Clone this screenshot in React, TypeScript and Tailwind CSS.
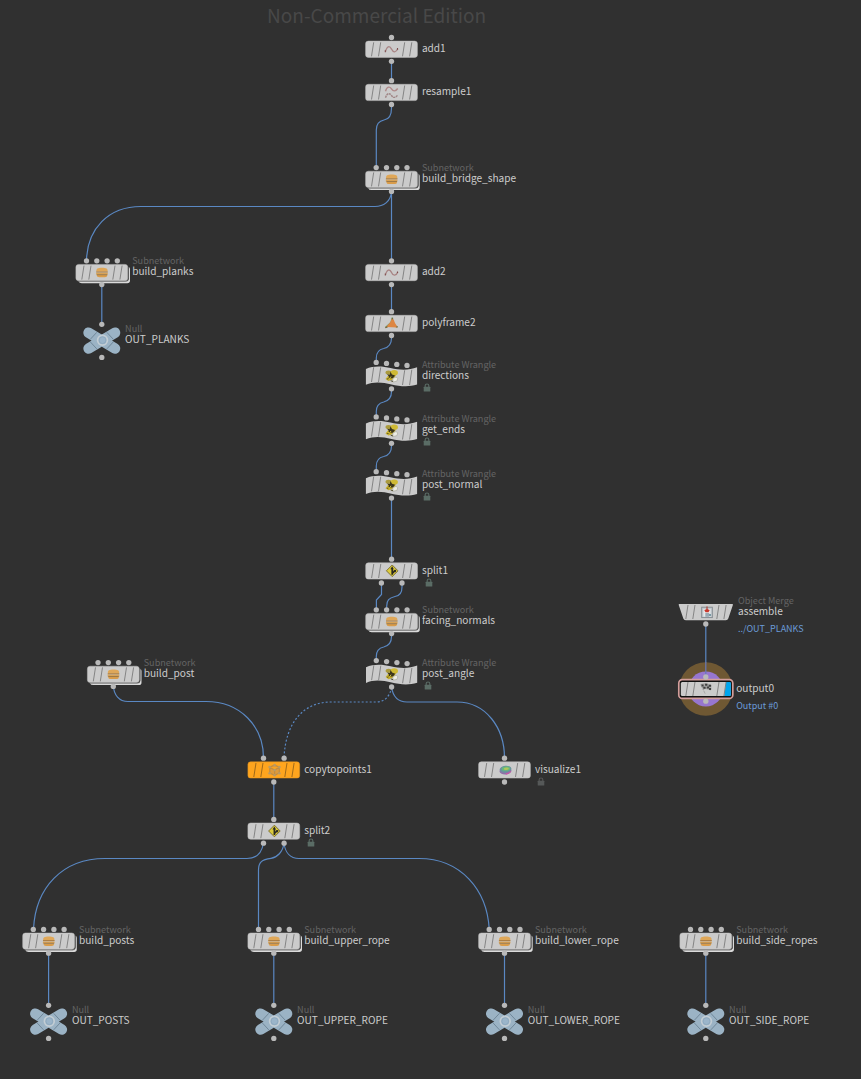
import React from "react";

type Kind = "box" | "subnet" | "wrangle" | "null" | "merge" | "output";
type Glyph = "curve" | "curves" | "burger" | "frame" | "bee" | "split" | "copy" | "viz" | "merge" | "flag" | "none";

interface NodeSpec {
  x: number;
  y: number;
  name: string;
  kind: Kind;
  glyph: Glyph;
  type?: string;
  info?: string;
  lock?: boolean;
  ins?: number[];
  outs?: number[];
  orange?: boolean;
}

const four = [-15.3, -5, 5.3, 15.5];

const nodes: NodeSpec[] = [
  { x: 391.5, y: 49.3, name: "add1", kind: "box", glyph: "curve", ins: [0], outs: [0] },
  { x: 391.5, y: 92.5, name: "resample1", kind: "box", glyph: "curves", ins: [0], outs: [0] },
  { x: 391.5, y: 179.4, name: "build_bridge_shape", kind: "subnet", glyph: "burger", type: "Subnetwork", ins: four, outs: [0] },
  { x: 101.8, y: 272.6, name: "build_planks", kind: "subnet", glyph: "burger", type: "Subnetwork", ins: four, outs: [0] },
  { x: 101.8, y: 340.6, name: "OUT_PLANKS", kind: "null", glyph: "none", type: "Null" },
  { x: 391.5, y: 272.6, name: "add2", kind: "box", glyph: "curve", ins: [0], outs: [0] },
  { x: 391.5, y: 323.5, name: "polyframe2", kind: "box", glyph: "frame", ins: [0], outs: [0] },
  { x: 391.5, y: 376, name: "directions", kind: "wrangle", glyph: "bee", type: "Attribute Wrangle", lock: true },
  { x: 391.5, y: 430.5, name: "get_ends", kind: "wrangle", glyph: "bee", type: "Attribute Wrangle", lock: true },
  { x: 391.5, y: 485.3, name: "post_normal", kind: "wrangle", glyph: "bee", type: "Attribute Wrangle", lock: true },
  { x: 391.6, y: 571, name: "split1", kind: "box", glyph: "split", lock: true, ins: [0], outs: [-10.2, 10.4] },
  { x: 391.6, y: 621.6, name: "facing_normals", kind: "subnet", glyph: "burger", type: "Subnetwork", ins: four, outs: [0] },
  { x: 391.6, y: 674.2, name: "post_angle", kind: "wrangle", glyph: "bee", type: "Attribute Wrangle", lock: true },
  { x: 113.3, y: 674.4, name: "build_post", kind: "subnet", glyph: "burger", type: "Subnetwork", ins: four, outs: [0] },
  { x: 273.8, y: 770, name: "copytopoints1", kind: "box", glyph: "copy", orange: true, ins: [-10.3, 10.3], outs: [0] },
  { x: 504.5, y: 770, name: "visualize1", kind: "box", glyph: "viz", lock: true, ins: [0], outs: [0] },
  { x: 273.8, y: 831.2, name: "split2", kind: "box", glyph: "split", lock: true, ins: [0], outs: [-10.3, 10.3] },
  { x: 48.6, y: 941.2, name: "build_posts", kind: "subnet", glyph: "burger", type: "Subnetwork", ins: four, outs: [0] },
  { x: 273.8, y: 941.2, name: "build_upper_rope", kind: "subnet", glyph: "burger", type: "Subnetwork", ins: four, outs: [0] },
  { x: 504.5, y: 941.2, name: "build_lower_rope", kind: "subnet", glyph: "burger", type: "Subnetwork", ins: four, outs: [0] },
  { x: 705.8, y: 941.2, name: "build_side_ropes", kind: "subnet", glyph: "burger", type: "Subnetwork", ins: four, outs: [0] },
  { x: 48.6, y: 1021.6, name: "OUT_POSTS", kind: "null", glyph: "none", type: "Null" },
  { x: 273.8, y: 1021.6, name: "OUT_UPPER_ROPE", kind: "null", glyph: "none", type: "Null" },
  { x: 504.5, y: 1021.6, name: "OUT_LOWER_ROPE", kind: "null", glyph: "none", type: "Null" },
  { x: 705.8, y: 1021.6, name: "OUT_SIDE_ROPE", kind: "null", glyph: "none", type: "Null" },
  { x: 705.8, y: 612, name: "assemble", kind: "merge", glyph: "merge", type: "Object Merge", info: "../OUT_PLANKS", outs: [0] },
  { x: 705.8, y: 689, name: "output0", kind: "output", glyph: "flag", info: "Output #0" },
];

// Short S-shaped link from the output dot down to the first input dot.
const bend = (top: number, bottom: number) =>
  `M391.5 ${top}V${top + 3}C391.5 ${top + 10} 387 ${top + 12.7} 383.7 ${top + 13.5}C379 ${top + 14.5} 376.3 ${top + 17} 376.3 ${top + 23}V${bottom}`;

const wires: string[] = [
  "M391.5 61V81",
  "M391.5 104V108C391.5 116 388 119.500 384 120C379 121 376.300 124 376.300 130V167",
  "M391.5 191C391 202 383 206.500 375 206.500H141C108 206.500 87.500 229 86.500 260",
  "M391.5 191V261",
  "M101.800 284V325",
  "M391.5 284V312",
  bend(335, 362),
  bend(388.5, 417),
  bend(443, 471),
  "M391.5 498V559",
  "M381.500 583V594.500L376.400 600V610",
  "M402 583V587C402 593 399 596 395 596.500C389 598 386.700 600 386.700 606V610",
  bend(633.5, 660),
  "M391.5 687C393 697 399 702 407 702H457C486 702 504.500 728 504.500 758",
  "M113.300 686C114 695 119 701.500 128 701.500H206C240 701.500 263.500 726 263.500 758",
  "M273.800 782V820",
  "M263.500 843C262 852 257 858.500 247 858.500H105C62 858.500 35.500 888 33.500 929",
  "M284 843C283 852 277 857.500 271 858.300C262 859.500 258.500 862 258.500 870V929",
  "M284 843C285 852 290 858.500 299 858.500H419C461 858.500 487 890 489.200 929",
  "M48.600 953V1006",
  "M273.800 953V1006",
  "M504.500 953V1006",
  "M705.800 953V1006",
  "M705.800 624V677",
];

function Dot({ x, y }: { x: number; y: number }) {
  return <circle cx={x} cy={y} r={2.65} fill="#b9b9b9" />;
}

function Ticks({ color = "#7c7c7c" }: { color?: string }) {
  return (
    <path
      d="M-17.800 -7L-20 7M-10.800 -7L-13 7M13.200 -7L11 7M20.300 -7L18.100 7"
      stroke={color}
      strokeWidth={0.9}
      fill="none"
    />
  );
}

function GlyphArt({ glyph }: { glyph: Glyph }) {
  switch (glyph) {
    case "curve":
      return (
        <g fill="none">
          <path d="M-6 2.300C-4.500 -3.700 -1.800 -3.700 0 -0.200C1.800 3.800 4.500 3.300 6.300 -0.500" stroke="#a88484" strokeWidth={1.300} />
          <path d="M-6.200 1v2M6 -1.200v1.700" stroke="#7e4c4c" strokeWidth={1.100} />
        </g>
      );
    case "curves":
      return (
        <g fill="none" stroke="#b08a8a" strokeWidth={1.4}>
          <path d="M-6 -1.300C-4.500 -6.300 -1.800 -6.300 0 -3.600C1.800 -0.800 4 -1 6.200 -4" />
          <path d="M-6 5.300C-4.500 0.300 -1.800 0.300 0 3C1.800 5.700 4 5.500 6.200 2.500" stroke="#a08686" strokeDasharray="2.200 0.600" />
        </g>
      );
    case "burger":
      return (
        <g transform="translate(0.1 -0.2)">
          <path d="M-5.500 -0.800C-6 -3.800 -4 -4.600 0 -4.600C4.300 -4.600 6.200 -3.800 5.600 -0.800Z" fill="#dfa758" />
          <path d="M-5.700 0.400H5.700L6 2.200H-5.800Z" fill="#d9a357" />
          <path d="M-5.700 -0.400H5.900" stroke="#a97a3d" strokeWidth={1} />
          <path d="M-5.300 2.700H5.500Q5.300 4.900 3 4.900H-2.700Q-5 4.900 -5.300 2.700Z" fill="#d99c4a" />
          <path d="M-5.200 2.300H5.400" stroke="#8f6a35" strokeWidth={0.8} />
        </g>
      );
    case "frame":
      return (
        <g>
          <path d="M1 -6L-0.500 -1L-6 4M-1 1L6 3.500" stroke="#789a68" strokeWidth={1.500} fill="none" />
          <path d="M0 -4.500L2.300 -4C2.800 -1.500 4 0.500 5.500 2.800V4L-4.800 3.600C-4 0.800 -0.800 0 0 -4.500Z" fill="#dd8642" />
          <path d="M-6.200 4.200L-4 3.300M5 3.200l1 .4M0.700 -5.500l.5 1.300" stroke="#7a6640" strokeWidth={1.300} />
        </g>
      );
    case "bee":
      return (
        <g transform="translate(0 -0.3)">
          <ellipse cx={-3} cy={-3.200} rx={3} ry={2} fill="#aa9a3c" />
          <ellipse cx={2.700} cy={-3} rx={3.700} ry={2.600} fill="#cfba35" />
          <path d="M-6 3.200L-2.500 -1.200L4.500 -0.800L2 3.500L-3 5.300Z" fill="#c2ac2a" />
          <path d="M-4.500 -1.500L-1.800 -1L-1 -4L0.500 -1.300L3.500 -0.200L1.500 2.600L-1.800 2.500L-4.800 4L-2.500 0.800Z" fill="#3a351c" />
          <path d="M-4.500 1.500L-2 2.800L-0.500 0.800" stroke="#d8c23a" strokeWidth={1} fill="none" />
          <path d="M1.300 2.800L4.500 1.300L6.300 2.800L5.300 5.500L1.500 6.300Z" fill="#ededE4" stroke="#a3a399" strokeWidth={0.600} />
          <path d="M-0.800 5L1.500 5.800" stroke="#55512f" strokeWidth={1} />
        </g>
      );
    case "split":
      return (
        <g transform="translate(0.6 -0.2)">
          <path d="M0 -5.800L5.800 0L0 5.800L-5.800 0Z" fill="#dccb3b" stroke="#75692a" strokeWidth={0.9} strokeLinejoin="round" />
          <path d="M0 4V-2.200M0 2.500L2.600 0" stroke="#2b2a20" strokeWidth={1.700} />
          <path d="M-1.900 -1.500L0 -4.600L1.600 -1.500ZM1.200 -0.800L4 -1L3.600 1.800Z" fill="#2b2a20" />
        </g>
      );
    case "copy":
      return (
        <g fill="none" stroke="#c08c42" strokeWidth={1.200}>
          <path d="M0.800 -5L5.500 -2.800V3L0.800 5.300L-4 3V-2.800ZM-4 -2.800L0.800 0L5.500 -2.800M0.800 0V5" fill="#dd9a3c" />
          <g fill="#b99a66" stroke="none">
            <circle cx={0.800} cy={-5} r={1.300} />
            <circle cx={5.600} cy={-3} r={1.300} />
            <circle cx={5.500} cy={3.300} r={1.300} />
            <circle cx={0.800} cy={5.300} r={1.300} />
            <circle cx={-4.200} cy={3.300} r={1.300} />
            <circle cx={-4.200} cy={-3} r={1.300} />
            <circle cx={0.800} cy={0} r={1.300} />
          </g>
        </g>
      );
    case "viz":
      return (
        <g transform="translate(0.9 -0.2) rotate(-6)">
          <ellipse cx={0} cy={1} rx={6} ry={3.700} fill="#8d70a8" />
          <path d="M0 4.200Q3.500 3.800 5 2" stroke="#c657a6" strokeWidth={1.400} fill="none" />
          <ellipse cx={0.200} cy={-0.600} rx={5.900} ry={3.500} fill="#6a929f" />
          <ellipse cx={0.700} cy={-1} rx={4.300} ry={2.200} fill="#67ba7c" />
          <ellipse cx={1} cy={-0.900} rx={2.500} ry={1.200} fill="#b0c65c" />
        </g>
      );
    case "merge":
      return (
        <g transform="translate(1.200 0)">
          <rect x={-5.300} y={-4.800} width={10.600} height={10.400} fill="#c3cacf" stroke="#80878c" strokeWidth={0.9} />
          <rect x={-3.600} y={-3} width={7.200} height={7.600} fill="#e4e7e9" />
          <path d="M-1.700 1H2.200V4.800H-1.700Z" fill="#9aa9b4" />
          <path d="M0 -5.500V-1" stroke="#ab4a40" strokeWidth={1.300} />
          <path d="M-2.700 -2L0 -3L2.700 -2L1.500 0.300H-1.500Z" fill="#c8382d" />
          <circle cx={3} cy={3} r={1} fill="#5b8592" />
        </g>
      );
    case "flag":
      return (
        <g>
          <path d="M-5 -5L0 -6L6 -4L5 1.500L0 0L-2.800 0.800Z" fill="#a8a8a8" />
          <path d="M-4.500 -4.400h2.300v2h-2.300zM-0.700 -5.300h2.300v2h-2.300zM2.900 -4.200h2.300v2H2.900zM-2.500 -2.200h2.300v2h-2.300zM1 -2.500h2.300v2H1zM3.300 -1h2v2h-2z" fill="#404040" />
          <path d="M-5 -4.500L-0.500 5" stroke="#8c8c8c" strokeWidth={0.800} strokeDasharray="1.500 1" />
        </g>
      );
    default:
      return null;
  }
}

function Body({ n }: { n: NodeSpec }) {
  if (n.kind === "null") {
    return (
      <g>
        <g stroke="#9bb3c5" strokeWidth={10.600} strokeLinecap="round">
          <path d="M-13.200 -7.900L13.200 7.900M13.200 -7.900L-13.200 7.900" />
        </g>
        <g stroke="#6b8294" strokeWidth={0.9}>
          <path d="M-11.500 -1.300L-5 -8.300M11.500 -1.300L5 -8.300M-11.500 1.300L-5 8.300M11.500 1.300L5 8.300" />
        </g>
        <circle cx={0.700} cy={-0.400} r={4.900} fill="#9db6c9" stroke="#c3cdd4" strokeWidth={1.700} />
        <circle cx={0.700} cy={-0.400} r={3.400} fill="#9bb5ca" stroke="#86a1b7" strokeWidth={0.600} />
        <Dot x={0} y={-16.300} />
        <Dot x={0} y={16.800} />
      </g>
    );
  }
  if (n.kind === "wrangle") {
    return (
      <g>
        <path
          d="M-25.600 -7C-18 -10.500 -9 -9.900 -1 -8C8 -5.900 17 -5.300 25.600 -8.700V8.600C17 11.300 8 10.300 0 8.400C-9 6.100 -18 5.300 -25.600 8.800Z"
          fill="#cbcbcb"
        />
        <path
          d="M-17.800 -8.800L-20 6M-10.800 -8.600L-13 6M13.200 -5.800L11 9M20.300 -6.300L18.100 9"
          stroke="#7c7c7c"
          strokeWidth={0.9}
        />
        <GlyphArt glyph="bee" />
        {four.map((x, i) => (
          <Dot key={x} x={x} y={-13.600 + i} />
        ))}
        <Dot x={0} y={12.800} />
      </g>
    );
  }
  if (n.kind === "output") {
    return (
      <g>
        <circle r={26.800} fill="#6f5833" />
        <circle r={17.500} fill="#9776cf" />
        <path d="M0 -27V-12" stroke="#6879b8" strokeWidth={1.200} />
        <rect x={-27} y={-9.300} width={54} height={18.700} rx={3.500} fill="#111" stroke="#d49e9b" strokeWidth={1.700} />
        <rect x={-25} y={-7.100} width={50} height={14.200} rx={1.500} fill="#cbcbcb" />
        <path d="M20.300 -7.100H23.800Q25 -7.100 25 -6V6Q25 7.100 23.800 7.100H18.500Z" fill="#00a5ee" />
        <Ticks />
        <GlyphArt glyph="flag" />
        <Dot x={0} y={-12} />
        <Dot x={0} y={12.200} />
      </g>
    );
  }
  return (
    <g>
      {n.kind === "subnet" && (
        <g>
          <path d="M-23.500 8.500Q-22.500 10.700 -20 10.700H25.500Q28.200 10.700 28.200 8V-3.500Q28.200 -5 27 -5.500V6Q27 8.500 24 8.500Z" fill="#dadada" />
          <path d="M-24 8.800H24Q26.600 8.800 26.600 6V-6" stroke="#555" strokeWidth={0.700} fill="none" />
        </g>
      )}
      {n.kind === "merge" ? (
        <path d="M-26.500 -8H26.500Q27.500 -8 27 -6.800L22.500 6.500Q22 8.200 20 8.200H-20Q-22 8.200 -22.500 6.500L-27 -6.800Q-27.500 -8 -26.500 -8Z" fill="#cbcbcb" />
      ) : (
        <rect x={-25.900} y={-8.200} width={51.800} height={16.300} rx={2.700} fill={n.orange ? "#ffa51e" : "#cbcbcb"} stroke={n.orange ? "#d98f20" : "#bdbdbd"} strokeWidth={0.500} />
      )}
      <Ticks color={n.orange ? "#94631b" : "#7c7c7c"} />
      <GlyphArt glyph={n.glyph} />
      {n.ins?.map((x) => <Dot key={x} x={x} y={-11.800} />)}
      {n.outs?.map((x) => <Dot key={x} x={x} y={12} />)}
    </g>
  );
}

function Lock({ wrangle, dim }: { wrangle: boolean; dim: boolean }) {
  return (
    <svg
      className={wrangle ? "absolute left-[1.6px] top-[14px] h-[9px] w-[8px]" : "absolute left-[2.6px] top-[14px] h-[9px] w-[8px]"}
      viewBox="0 0 8 9"
    >
      <path d="M2.200 4V2.500Q2.200 1 4 1T5.800 2.500V4" fill="none" stroke={dim ? "#555" : "#5a6c65"} strokeWidth={1.100} />
      <rect x={0.700} y={3.700} width={6.600} height={4.800} rx={0.500} fill={dim ? "#555858" : "#5a6c65"} />
    </svg>
  );
}

function GraphNode({ n }: { n: NodeSpec }) {
  const left = Math.floor(n.x);
  const top = Math.floor(n.y);
  const flat = n.kind === "box" || n.kind === "merge" || n.kind === "output";
  const dx = n.x - left + (n.kind === "null" ? 23.3 : n.kind === "merge" ? 32.2 : 30.4);
  const dy = Math.round(n.y - (flat ? 9.3 : 9.5)) + 2 - top;
  return (
    <div className="absolute h-0 w-0" style={{ left, top }}>
      <svg className="absolute left-0 top-0 h-px w-px overflow-visible">
        <g transform={`translate(${n.x - left} ${n.y - top})`}>
          <Body n={n} />
        </g>
      </svg>
      <div className="absolute whitespace-nowrap text-[10.1px] leading-[11px]" style={{ left: dx, top: dy }}>
        {n.type && <div className="absolute bottom-full left-0 text-[9.1px] leading-[10px] text-[#646464]">{n.type}</div>}
        <div className="text-[#cccccc]">{n.name}</div>
        {n.info && <div className="mt-[7px] text-[9px] leading-[11px] text-[#6b9bd8]">{n.info}</div>}
        {n.lock && <Lock wrangle={n.kind === "wrangle"} dim={n.name === "visualize1"} />}
      </div>
    </div>
  );
}

export default function App() {
  return (
    <main className="relative h-[1079px] w-[861px] overflow-hidden bg-[#303030] font-['Noto_Sans_CJK_SC','Noto_Sans',sans-serif]">
      <div className="absolute left-[267px] top-0 whitespace-nowrap text-[19.05px] leading-[29px] text-[#484848]">Non-Commercial Edition</div>
      <svg className="absolute inset-0 h-full w-full" viewBox="0 0 861 1079" fill="none" stroke="#5a88c3" strokeWidth={1.2}>
        {wires.map((d) => (
          <path key={d} d={d} />
        ))}
        <path d="M391.500 687C390 697 384 702 376 702H331C304 702 285.500 722 284 758" strokeDasharray="2 2" />
      </svg>
      {nodes.map((n) => (
        <GraphNode key={n.name} n={n} />
      ))}
    </main>
  );
}
